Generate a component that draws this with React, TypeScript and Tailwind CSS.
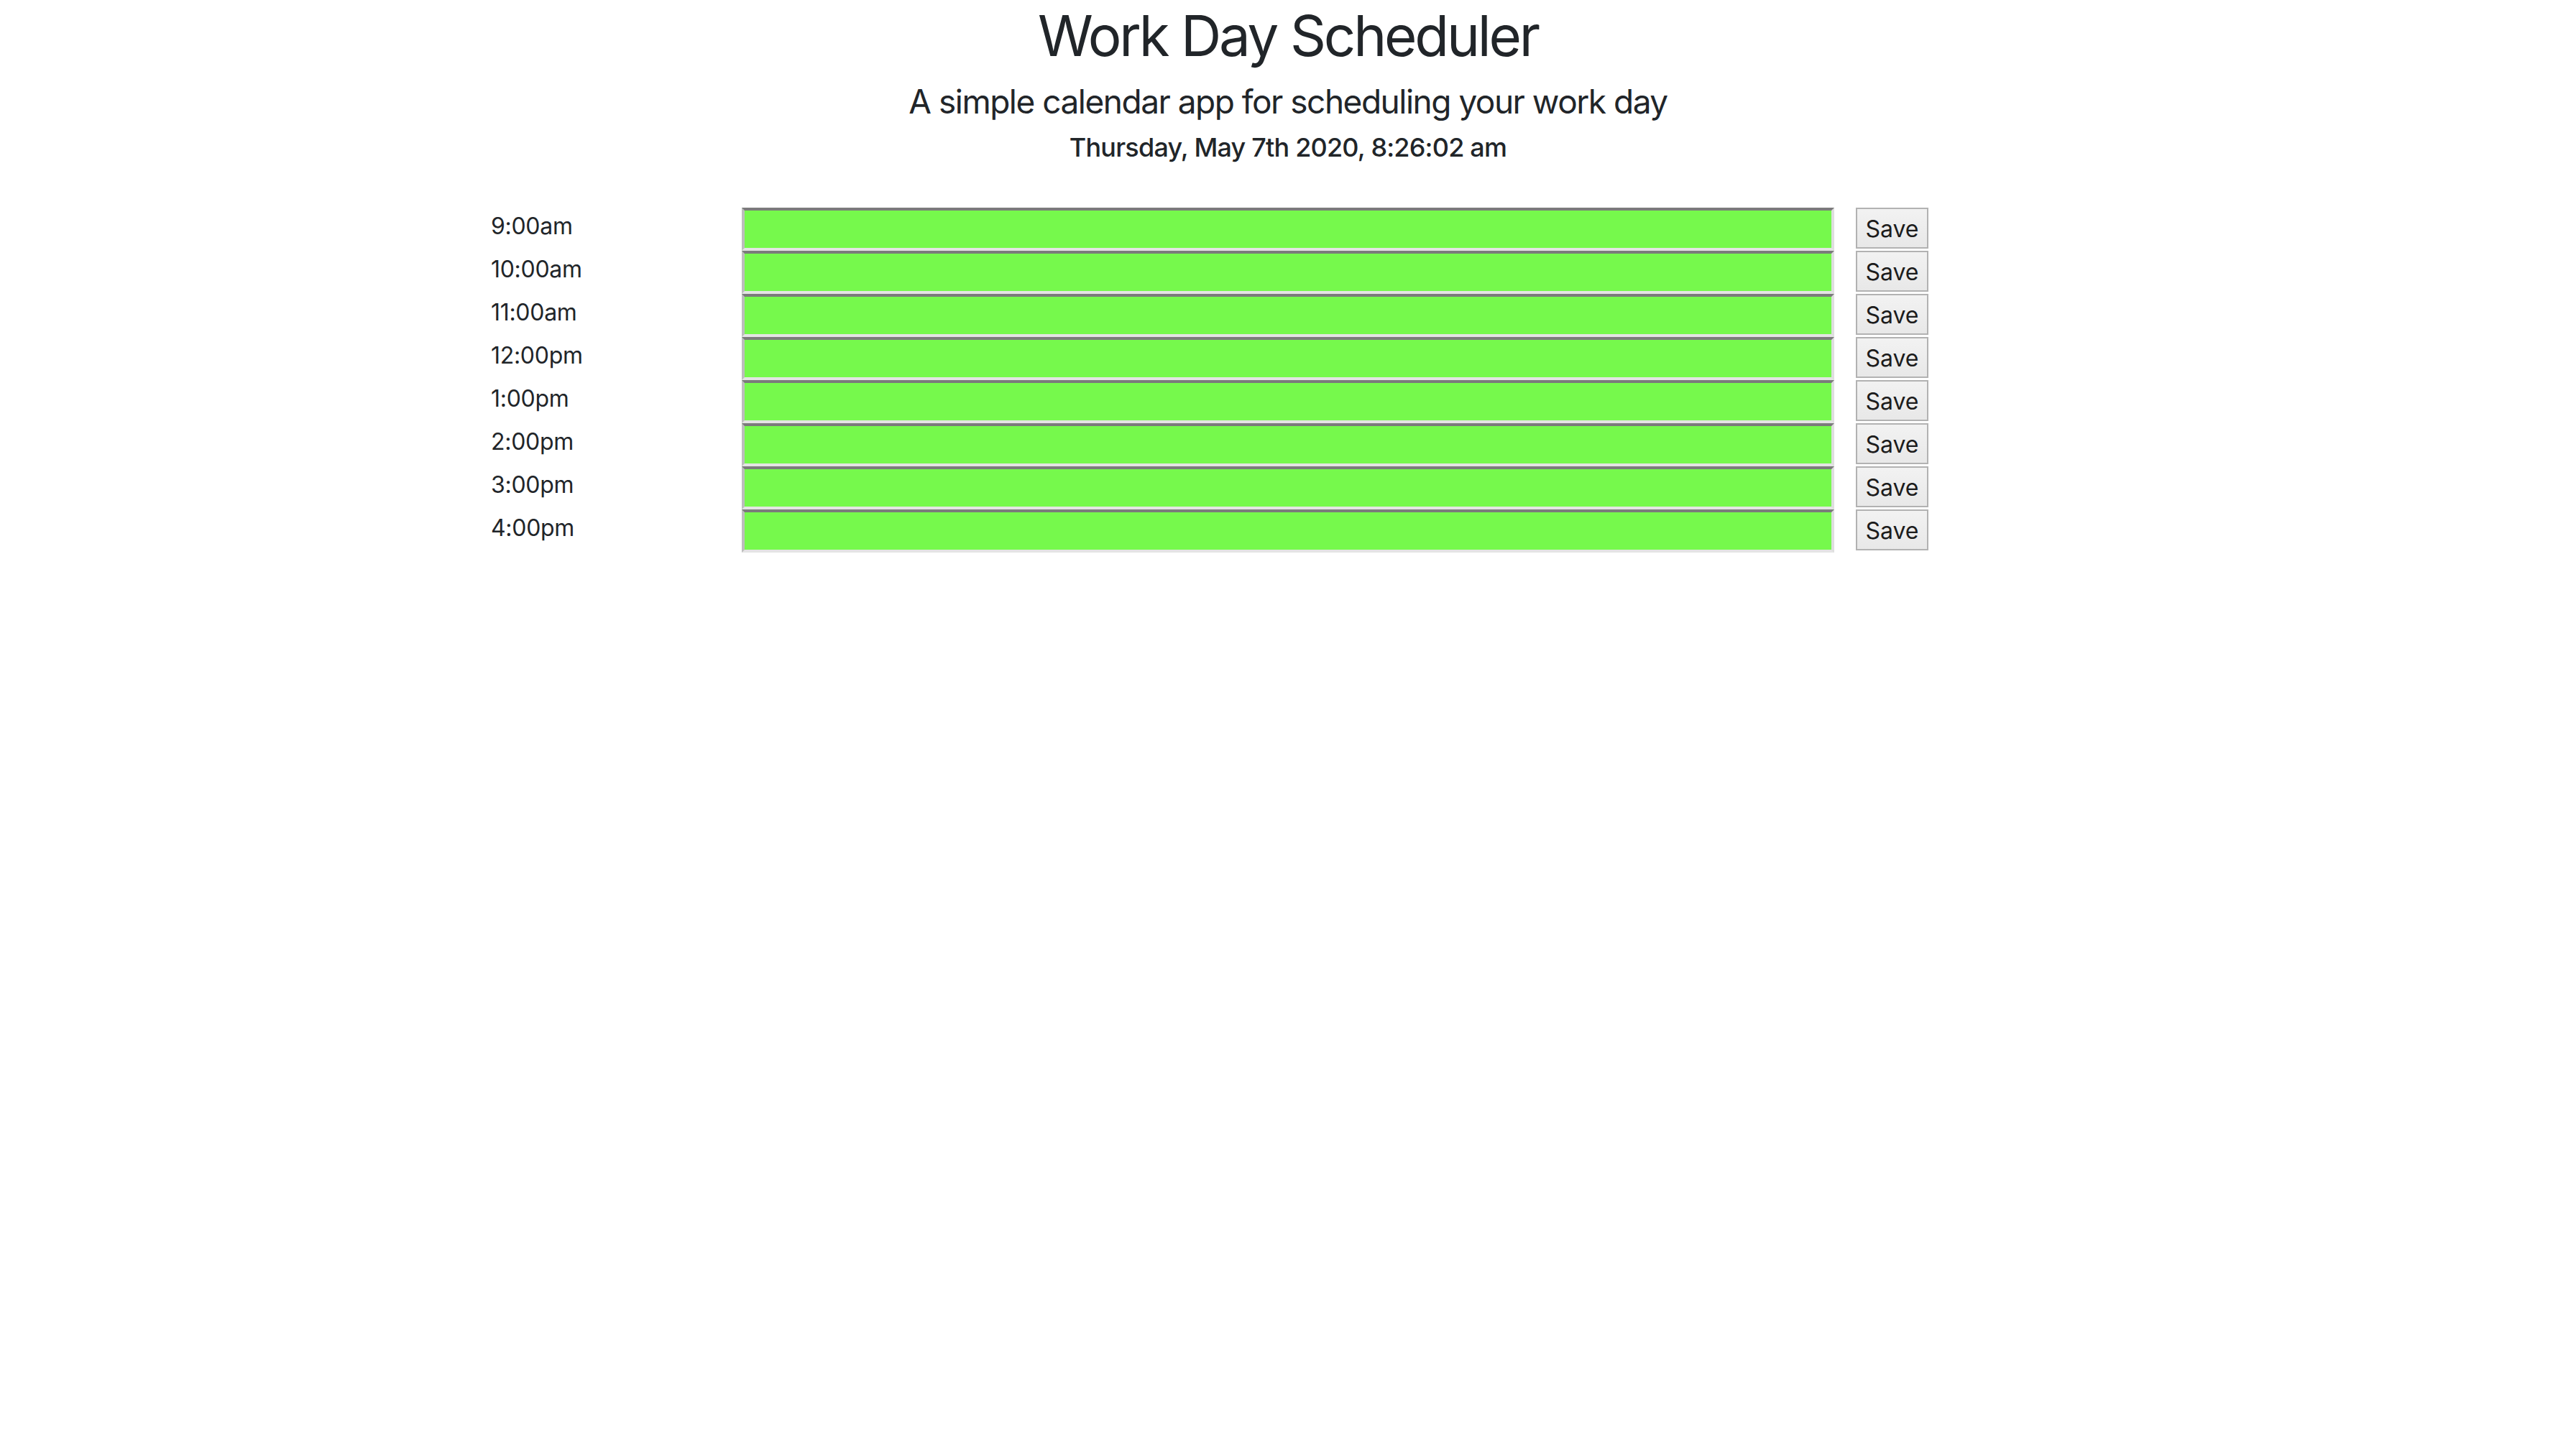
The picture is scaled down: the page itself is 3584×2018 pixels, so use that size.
import React from 'react';

const hours = ['9:00am', '10:00am', '11:00am', '12:00pm', '1:00pm', '2:00pm', '3:00pm', '4:00pm'];

function TimeBlock({ hour }: { hour: string }) {
  return (
    <div className="flex h-[60px]">
      <div className="w-[380px] pl-[31px] pt-[2px] text-[32px] leading-[48px] tracking-[-0.3px] text-[#212529]">{hour}</div>
      <textarea
        className="h-[60px] w-[1520px] resize-none border-4 border-t-[#7b7b7b] border-l-[#bdbdbd] border-r-[#dedede] border-b-[#e4e4e4] bg-[#76f94c] outline-none"
        defaultValue=""
      />
      <div className="pl-[30px]">
        <button className="h-[57px] w-[101px] border-2 border-[#b2b2b2] bg-gradient-to-b from-[#f2f2f2] to-[#e8e8e8] pt-[2px] text-[32px] leading-[48px] text-[#1c1c1c]">
          Save
        </button>
      </div>
    </div>
  );
}

export default function App() {
  return (
    <div className="min-h-screen bg-white font-['Inter','Liberation_Sans',sans-serif] text-[#212529]">
      <header className="flex flex-col items-center pt-[2px]">
        <h1 className="text-[78px] leading-[96px] tracking-[-3.2px]">Work Day Scheduler</h1>
        <p className="mt-[14px] text-[46px] leading-[58px] tracking-[-1.5px]">A simple calendar app for scheduling your work day</p>
        <p className="mt-[13px] text-[36px] font-medium leading-[44px] tracking-[-0.8px]">Thursday, May 7th 2020, 8:26:02 am</p>
      </header>
      <main className="mx-auto mt-[62px] w-[2280px]">
        {hours.map((h) => (
          <TimeBlock key={h} hour={h} />
        ))}
      </main>
    </div>
  );
}
